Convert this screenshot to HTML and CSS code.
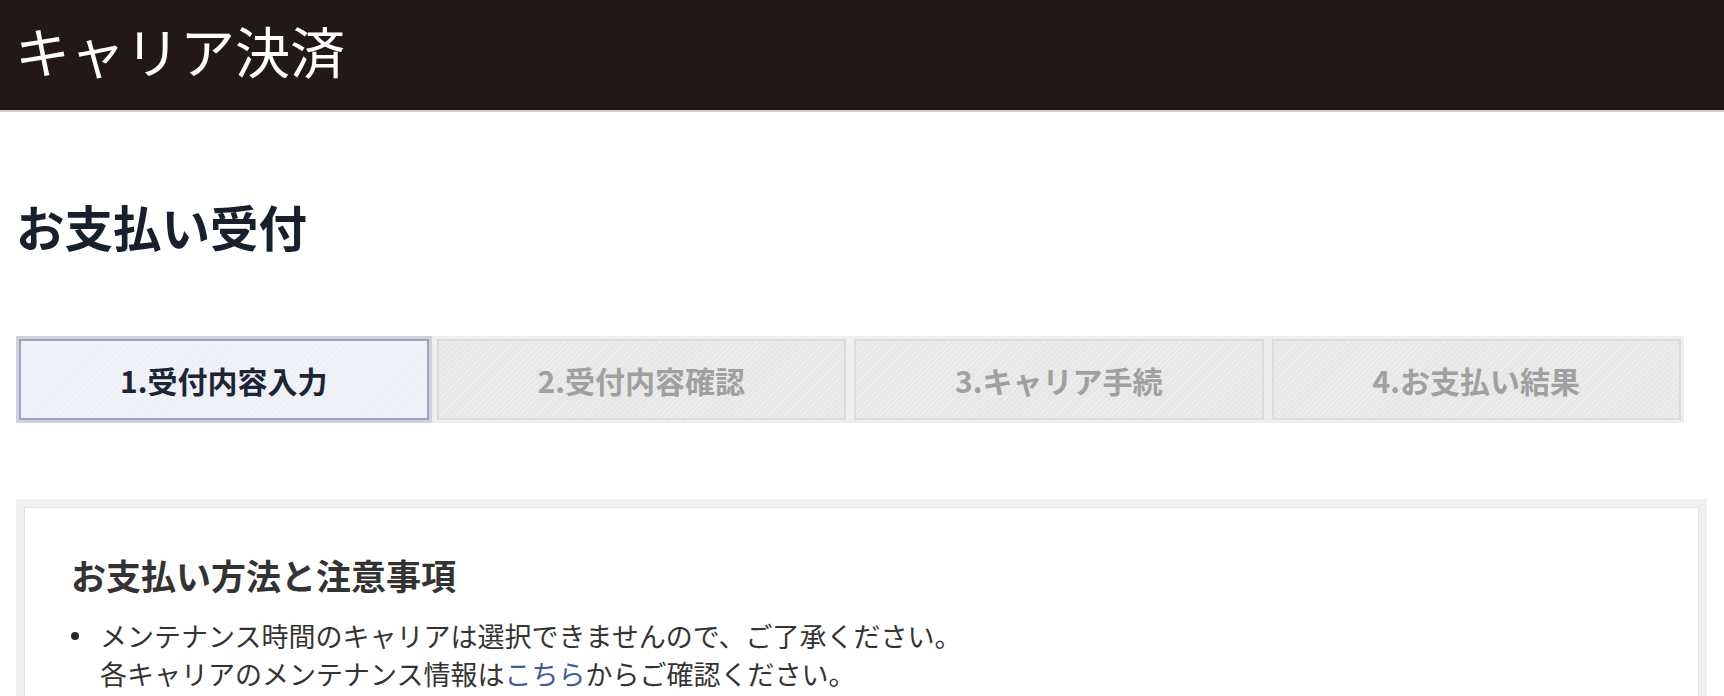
FILE: index.html
```html
<!DOCTYPE html>
<html lang="ja">
<head>
<meta charset="utf-8">
<title>キャリア決済</title>
<link rel="stylesheet" href="styles.css">
</head>
<body>
<header class="site-header">
  <div class="site-title">キャリア決済</div>
</header>
<main class="page">
  <h1 class="page-title">お支払い受付</h1>
  <ol class="steps">
    <li class="step step-active">1.受付内容入力</li>
    <li class="step">2.受付内容確認</li>
    <li class="step">3.キャリア手続</li>
    <li class="step">4.お支払い結果</li>
  </ol>
  <section class="card">
    <h2 class="card-title">お支払い方法と注意事項</h2>
    <ul class="notes">
      <li class="note">メンテナンス時間のキャリアは選択できませんので、ご了承ください。<br>各キャリアのメンテナンス情報は<a class="link" href="#">こちら</a>からご確認ください。</li>
    </ul>
  </section>
</main>
</body>
</html>
```
FILE: styles.css
```css
* { box-sizing: border-box; }
html, body { margin: 0; padding: 0; background: #fff; }
body {
  font-family: "Noto Sans CJK JP", "Noto Sans", sans-serif;
  color: #333;
  height: 696px;
  overflow: hidden;
}
.site-header {
  height: 112px;
  background: #221815;
  border-bottom: 2px solid #d0d0d0;
  display: flex;
  align-items: flex-start;
  padding: 19px 0 0 15px;
}
.site-title {
  color: #fff;
  font-size: 55px;
  line-height: 60px;
  font-weight: 400;
}
.page {
  padding: 0 17px 0 16px;
}
.page-title {
  margin: 90px 0 0 0;
  font-size: 48.5px;
  line-height: 49px;
  font-weight: 700;
  color: #18202e;
}
.steps {
  list-style: none;
  margin: 85px 0 0 0;
  padding: 3px;
  width: 1668px;
  display: flex;
  gap: 8px;
  background: #eeeeee;
}
.step {
  flex: 1 1 0;
  height: 81px;
  display: flex;
  align-items: center;
  justify-content: center;
  font-size: 30px;
  font-weight: 700;
  color: #a0a0a0;
  border: 2px solid #d8dbe0;
  background-color: #e7e7e7;
  background-image: repeating-linear-gradient(-45deg, rgba(255,255,255,0) 0 3px, rgba(255,255,255,0.35) 3px 4px);
}
.step-active {
  color: #1c2535;
  border-color: #9ba1c4;
  background-color: #edf0f6;
  box-shadow: 0 0 0 3px #cfd1d8;
  position: relative;
}
.card {
  margin-top: 76px;
  border: 8px solid #efefef;
  box-shadow: inset 0 0 0 1px #e2e2e2;
  padding: 50px 46px 40px 47px;
  min-height: 240px;
}
.card-title {
  margin: 0;
  font-size: 35px;
  line-height: 35px;
  font-weight: 700;
  color: #333;
}
.notes {
  list-style: none;
  margin: 25px 0 0 0;
  padding: 0;
}
.note {
  position: relative;
  padding-left: 29px;
  font-size: 27px;
  line-height: 38px;
  color: #333;
}
.note::before {
  content: "";
  position: absolute;
  left: 0;
  top: 15px;
  width: 8px;
  height: 8px;
  border-radius: 50%;
  background: #2a2a2a;
}
.link {
  color: #3d5aa8;
  text-decoration: none;
}
```
